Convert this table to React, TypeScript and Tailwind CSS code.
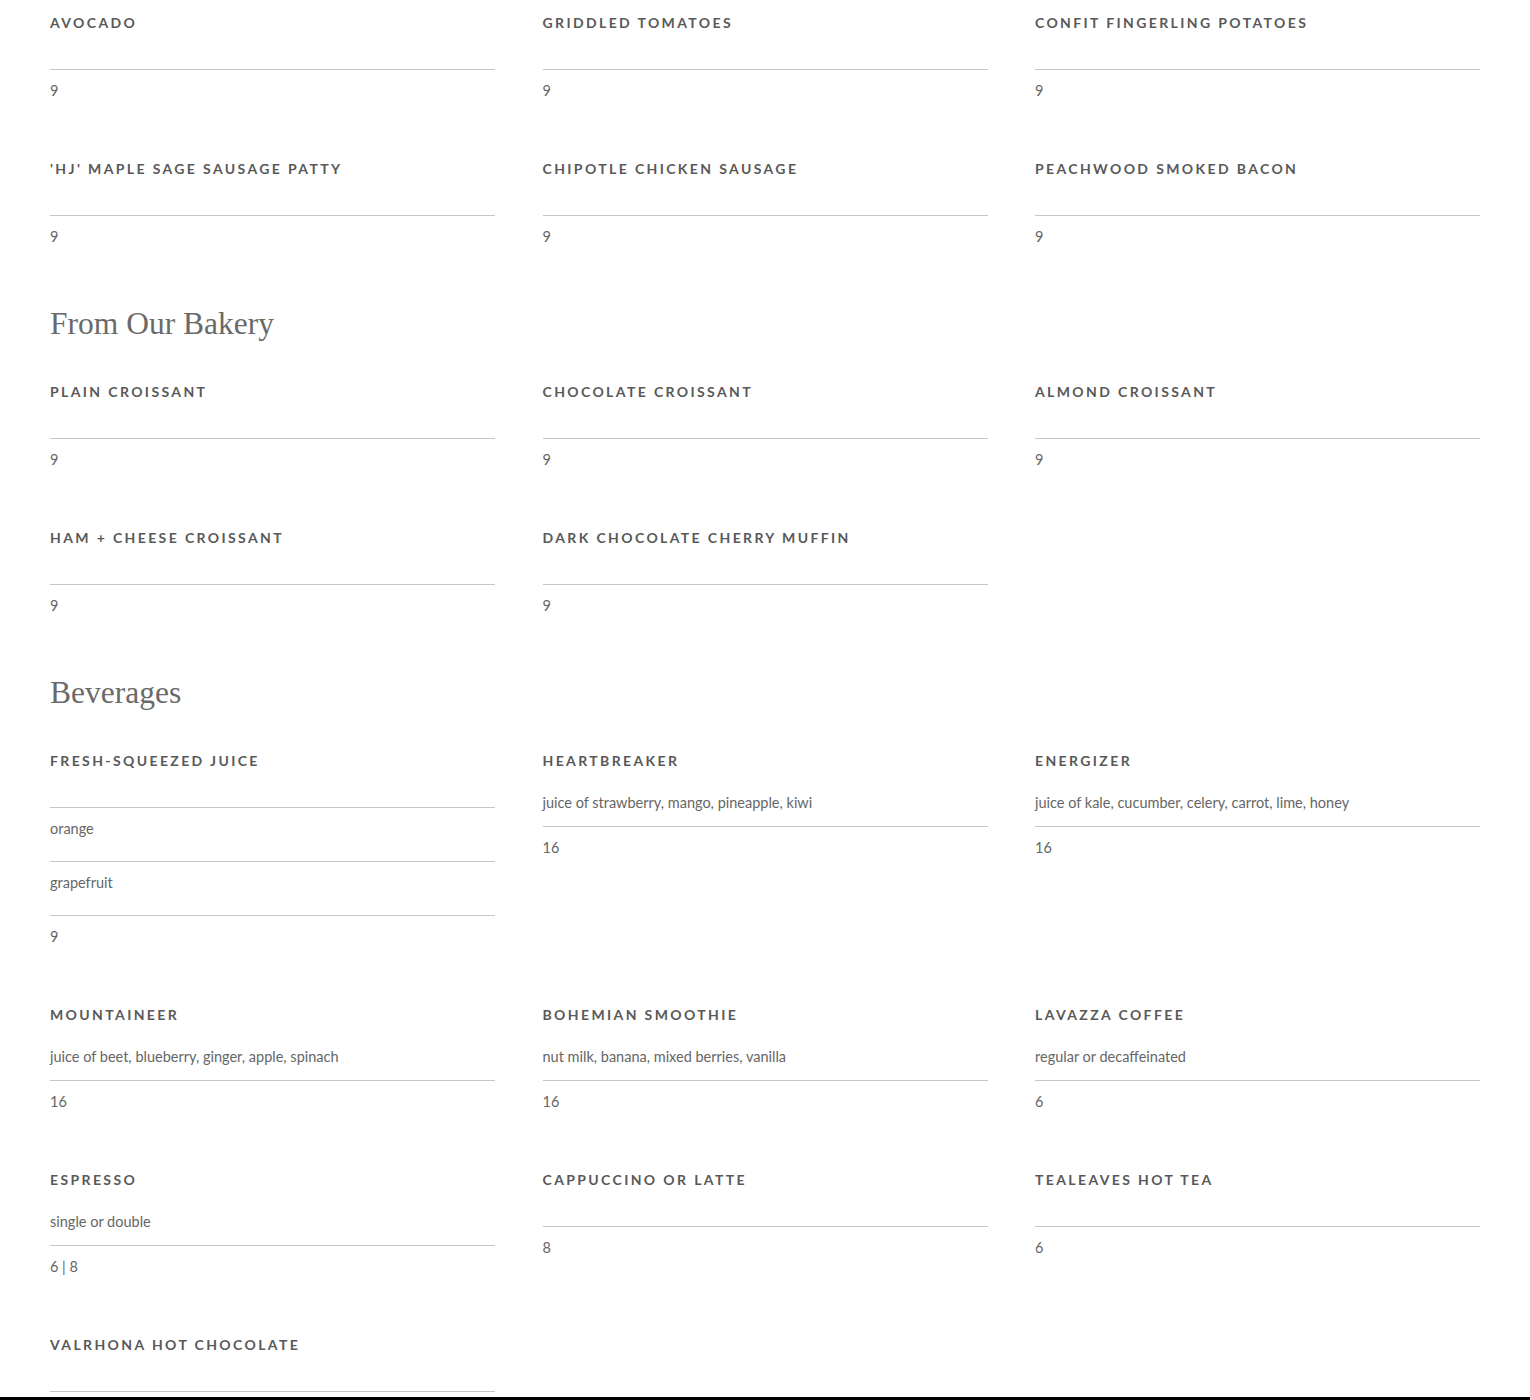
import React from "react";

interface MenuItem {
  name: string;
  desc?: string;
  options?: string[];
  price: string;
}

interface Section {
  title?: string;
  items: MenuItem[];
}

const sections: Section[] = [
  {
    items: [
      { name: "Avocado", price: "9" },
      { name: "Griddled Tomatoes", price: "9" },
      { name: "Confit Fingerling Potatoes", price: "9" },
      { name: "'HJ' Maple Sage Sausage Patty", price: "9" },
      { name: "Chipotle Chicken Sausage", price: "9" },
      { name: "Peachwood Smoked Bacon", price: "9" },
    ],
  },
  {
    title: "From Our Bakery",
    items: [
      { name: "Plain Croissant", price: "9" },
      { name: "Chocolate Croissant", price: "9" },
      { name: "Almond Croissant", price: "9" },
      { name: "Ham + Cheese Croissant", price: "9" },
      { name: "Dark Chocolate Cherry Muffin", price: "9" },
    ],
  },
  {
    title: "Beverages",
    items: [
      { name: "Fresh-Squeezed Juice", options: ["orange", "grapefruit"], price: "9" },
      { name: "Heartbreaker", desc: "juice of strawberry, mango, pineapple, kiwi", price: "16" },
      { name: "Energizer", desc: "juice of kale, cucumber, celery, carrot, lime, honey", price: "16" },
      { name: "Mountaineer", desc: "juice of beet, blueberry, ginger, apple, spinach", price: "16" },
      { name: "Bohemian Smoothie", desc: "nut milk, banana, mixed berries, vanilla", price: "16" },
      { name: "Lavazza Coffee", desc: "regular or decaffeinated", price: "6" },
      { name: "Espresso", desc: "single or double", price: "6 | 8" },
      { name: "Cappuccino or Latte", price: "8" },
      { name: "Tealeaves Hot Tea", price: "6" },
      { name: "Valrhona Hot Chocolate", price: "" },
    ],
  },
];

const sans = "font-['Lato','Open_Sans',sans-serif]";

function Item({ item }: { item: MenuItem }) {
  return (
    <div className="flex flex-col">
      <h3
        className={`${sans} text-[14px] leading-[20px] font-bold uppercase tracking-[0.17em] text-[#595959] ${
          item.desc ? "mb-[22px]" : "mb-[36px]"
        }`}
      >
        {item.name}
      </h3>
      {item.desc && (
        <p className={`${sans} text-[14.5px] leading-[20px] text-[#666] pb-[13px]`}>{item.desc}</p>
      )}
      {item.options?.map((opt) => (
        <div
          key={opt}
          className={`${sans} border-t border-[#c6c6c6] pt-[11px] pb-[22px] text-[14.5px] leading-[20px] text-[#666]`}
        >
          {opt}
        </div>
      ))}
      <div
        className={`${sans} border-t border-[#c6c6c6] pt-[11px] pb-[58px] text-[14.5px] leading-[20px] text-[#666]`}
      >
        {item.price}
      </div>
    </div>
  );
}

export default function App() {
  return (
    <div className="min-h-screen bg-white px-[50px] pt-[13px]">
      {sections.map((section, i) => (
        <section key={i}>
          {section.title && (
            <h2 className="font-['Liberation_Serif',serif] text-[31.5px] leading-[40px] font-normal text-[#6a6a6a] mt-[-1px] mb-[38px]">
              {section.title}
            </h2>
          )}
          <div className="grid grid-cols-3 gap-x-[47.5px]">
            {section.items.map((item) => (
              <Item key={item.name} item={item} />
            ))}
          </div>
        </section>
      ))}
      <div className="fixed bottom-0 left-0 right-0 h-[3px] bg-black" />
    </div>
  );
}
